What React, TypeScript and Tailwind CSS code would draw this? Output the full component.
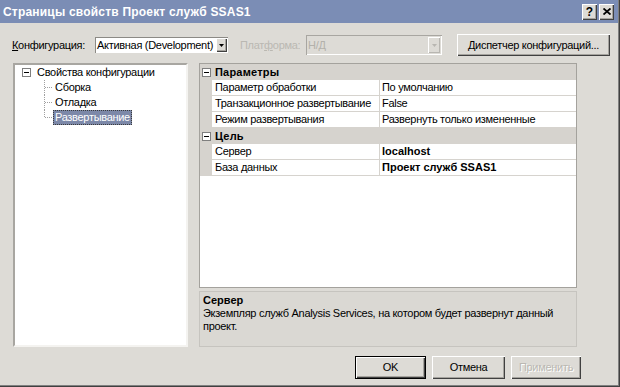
import React from "react";

function MinusBox() {
  return (
    <span className="w-[9px] h-[9px] border border-[#7f7f7f] bg-white flex items-center justify-center shrink-0">
      <span className="w-[5px] h-[1px] bg-black" />
    </span>
  );
}

function Raised({ className = "", children }: { className?: string; children?: React.ReactNode }) {
  return (
    <div
      className={
        "bg-[#dddbd6] flex items-center justify-center shadow-[inset_1px_1px_0_#ffffff,inset_-1px_-1px_0_#404040,inset_-2px_-2px_0_#a5a39e] " +
        className
      }
    >
      {children}
    </div>
  );
}

function Connector({ last }: { last?: boolean }) {
  return (
    <svg width="9" height="15" className="shrink-0">
      <line x1="0.5" y1="0" x2="0.5" y2={last ? 8 : 15} stroke="#a0a0a0" strokeDasharray="1 1" />
      <line x1="1" y1="7.5" x2="9" y2="7.5" stroke="#a0a0a0" strokeDasharray="1 1" />
    </svg>
  );
}

const rows1 = [
  ["Параметр обработки", "По умолчанию"],
  ["Транзакционное развертывание", "False"],
  ["Режим развертывания", "Развернуть только измененные"],
];
const rows2 = [
  ["Сервер", "localhost"],
  ["База данных", "Проект служб SSAS1"],
];

function Category({ title }: { title: string }) {
  return (
    <div className="h-[16px] bg-[#d6d3ce] flex items-center pl-[2px]">
      <MinusBox />
      <span className="ml-[4px] font-bold tracking-[0.2px]">{title}</span>
    </div>
  );
}

function PropRow({ name, value, bold }: { name: string; value: string; bold?: boolean }) {
  return (
    <div className="h-[16px] flex border-b border-[#d6d3ce]">
      <div className="w-[12px] bg-[#d6d3ce]" />
      <div className="w-[168px] pl-[3px] border-r border-[#d6d3ce] bg-white flex items-center whitespace-nowrap overflow-hidden">
        {name}
      </div>
      <div
        className={
          "flex-1 pl-[2px] bg-white flex items-center whitespace-nowrap " + (bold ? "font-bold tracking-normal" : "")
        }
      >
        {value}
      </div>
    </div>
  );
}

export default function App() {
  return (
    <div className="w-[620px] h-[387px] overflow-hidden border-r border-b border-[#404040] font-['Liberation_Sans',Arial,sans-serif] text-[11px] tracking-[-0.3px] text-black">
      <div className="h-full bg-[#dddbd6] border-r border-b border-[#808080] flex flex-col">
        {/* title bar */}
        <div className="h-[23px] bg-[#7b8db5] flex items-center pl-[3px] pr-[4px]">
          <span className="flex-1 font-bold text-white text-[12px] tracking-[0.2px]">
            Страницы свойств Проект служб SSAS1
          </span>
          <Raised className="w-[15px] h-[16px] font-bold text-[12px] leading-none tracking-normal">?</Raised>
          <Raised className="w-[15px] h-[16px] ml-[2px]">
            <svg width="8" height="7" viewBox="0 0 8 7">
              <path d="M0.5 0.5 L7.5 6.5 M7.5 0.5 L0.5 6.5" stroke="#000" strokeWidth="1.8" />
            </svg>
          </Raised>
        </div>

        {/* configuration row */}
        <div className="h-[22px] mt-[11px] pl-[12px] flex items-center">
          <span className="w-[83px]">
            <u>К</u>онфигурация:
          </span>
          <div className="w-[133px] h-[16px] bg-white flex items-center shadow-[inset_1px_1px_0_#8c8a85,inset_-1px_-1px_0_#ffffff] pl-[2px] pr-[1px] py-[1px]">
            <span className="flex-1 whitespace-nowrap">Активная (Development)</span>
            <Raised className="w-[11px] h-[14px]">
              <svg width="5" height="3">
                <path d="M0 0 H5 L2.5 3 Z" fill="#000" />
              </svg>
            </Raised>
          </div>
          <span className="ml-[12px] w-[66px] text-[#bab8b2]">
            Плат<u>ф</u>орма:
          </span>
          <div className="w-[136px] h-[20px] bg-[#dddbd6] flex items-center shadow-[inset_1px_1px_0_#a8a6a1,inset_-1px_-1px_0_#ffffff] pl-[2px] pr-[2px]">
            <span className="flex-1 text-[#b3b1ab]">Н/Д</span>
            <div className="w-[12px] h-[16px] bg-[#dddbd6] flex items-center justify-center shadow-[inset_1px_1px_0_#ffffff,inset_-1px_-1px_0_#b8b6b1]">
              <svg width="5" height="3">
                <path d="M0 0 H5 L2.5 3 Z" fill="#b8b6b1" />
              </svg>
            </div>
          </div>
          <Raised className="ml-[15px] w-[153px] h-[22px]">
            <span>
              <u>Д</u>испетчер конфигураций...
            </span>
          </Raised>
        </div>

        {/* main */}
        <div className="h-[284px] mt-[7px] pl-[13px] flex">
          <div className="w-[175px] h-full bg-white border-2 border-t-[#a8a6a1] border-l-[#a8a6a1] border-r-[#f4f3f0] border-b-[#f4f3f0]">
            <div className="h-[15px] flex items-center pl-[7px]">
              <MinusBox />
              <span className="ml-[6px]">Свойства конфигурации</span>
            </div>
            <div className="h-[15px] flex items-center pl-[29px]">
              <Connector />
              <span className="px-[2px]">Сборка</span>
            </div>
            <div className="h-[15px] flex items-center pl-[29px]">
              <Connector />
              <span className="px-[2px]">Отладка</span>
            </div>
            <div className="h-[15px] flex items-center pl-[29px]">
              <Connector last />
              <span className="h-[15px] px-[2px] flex items-center bg-[#7c88a8] text-white outline outline-1 outline-dotted outline-offset-[-1px] outline-[#3a3a3a]">
                Развертывание
              </span>
            </div>
          </div>

          <div className="w-[378px] ml-[11px] flex flex-col">
            <div className="h-[225px] border border-[#a4a29d] bg-white flex flex-col">
              <Category title="Параметры" />
              {rows1.map(([n, v]) => (
                <PropRow key={n} name={n} value={v} />
              ))}
              <Category title="Цель" />
              {rows2.map(([n, v]) => (
                <PropRow key={n} name={n} value={v} bold />
              ))}
            </div>
            <div className="h-[56px] mt-[3px] border border-[#c6c4bf] bg-[#dad8d3] pl-[3px] pt-[2px] leading-[13px]">
              <div className="font-bold tracking-normal">Сервер</div>
              <div>
                Экземпляр служб Analysis Services, на котором будет развернут данный
                <br />
                проект.
              </div>
            </div>
          </div>
        </div>

        {/* buttons */}
        <div className="h-[23px] mt-[9px] pl-[355px] flex gap-[6px]">
          <div className="w-[71px] h-[23px] border border-black">
            <Raised className="w-full h-full">OK</Raised>
          </div>
          <Raised className="w-[73px] h-[23px]">Отмена</Raised>
          <Raised className="w-[70px] h-[23px] text-[#bab8b2] [text-shadow:1px_1px_0_#ffffff]">Применить</Raised>
        </div>
      </div>
    </div>
  );
}
